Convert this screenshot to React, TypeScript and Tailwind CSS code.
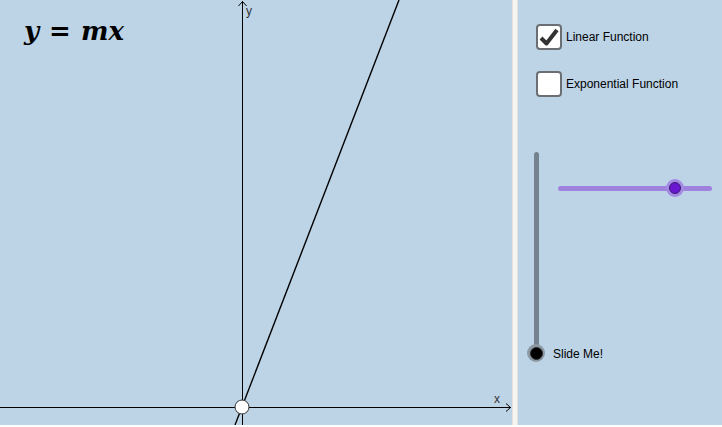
import React from 'react'

const BG = 'bg-[#bdd4e7]'

function Graph() {
  // origin of the coordinate system in canvas pixels
  const ox = 242.5
  const oy = 407.5
  return (
    <div className={`relative w-[512px] h-[425px] overflow-hidden ${BG}`}>
      <svg width="512" height="425" className="absolute inset-0">
        <line x1={ox} y1="425" x2={ox} y2="1" stroke="#000" strokeWidth="1" />
        <polyline points={`${ox - 4},6 ${ox},1.5 ${ox + 4},6`} fill="none" stroke="#000" strokeWidth="1" />
        <line x1="0" y1={oy} x2="511" y2={oy} stroke="#000" strokeWidth="1" />
        <polyline points={`506,${oy - 4} 510.5,${oy} 506,${oy + 4}`} fill="none" stroke="#000" strokeWidth="1" />
        <text x="246" y="15" fontFamily="Liberation Sans, Arial, sans-serif" fontSize="12" fill="#333">y</text>
        <text x="494" y="403" fontFamily="Liberation Sans, Arial, sans-serif" fontSize="12" fill="#333">x</text>
        <line x1="235" y1="425" x2="399" y2="0" stroke="#000" strokeWidth="1.4" />
        <circle cx={ox - 0.5} cy={oy - 0.5} r="7" fill="#fff" stroke="#333" strokeWidth="1" />
      </svg>
      <div className="absolute left-[24px] top-[12px] flex items-baseline text-[26px] font-bold text-black font-['DejaVu_Serif',serif]">
        <span className="italic">y</span>
        <span className="mx-[10px]">=</span>
        <span className="italic">mx</span>
      </div>
    </div>
  )
}

function Checkbox({ checked, label }: { checked: boolean; label: string }) {
  return (
    <div className="flex items-center gap-[4px] h-[26px]">
      <div className="w-[26px] h-[26px] rounded-[4px] border-2 border-[#6b6f73] bg-white flex items-center justify-center">
        {checked && (
          <svg width="20" height="18" viewBox="0 0 20 18">
            <path d="M2 10 L7.5 15.5 L18 2" fill="none" stroke="#333" strokeWidth="4" strokeLinejoin="round" />
          </svg>
        )}
      </div>
      <span className="text-[12px] text-black font-['Liberation_Sans',Arial,sans-serif]">{label}</span>
    </div>
  )
}

function Sliders() {
  return (
    <div className="relative mt-[55px] h-[220px]">
      {/* vertical slider */}
      <div className="absolute left-[-2px] top-0 w-[5px] h-[201px] rounded-full bg-[#74838f]" />
      <div className="absolute left-[-9px] top-[192px] w-[18px] h-[18px] rounded-full bg-[#8c99a3] flex items-center justify-center">
        <div className="w-[13px] h-[13px] rounded-full bg-black border border-[#2a2a2a]" />
      </div>
      <span className="absolute left-[17px] top-[193px] text-[12px] text-black font-['Liberation_Sans',Arial,sans-serif]">Slide Me!</span>

      {/* horizontal slider */}
      <div className="absolute left-[22px] top-[34px] w-[154px] h-[5px] rounded-full bg-[#9f82de]" />
      <div className="absolute left-[130px] top-[27px] w-[18px] h-[18px] rounded-full bg-[#a48ae4] flex items-center justify-center">
        <div className="w-[12px] h-[12px] rounded-full bg-[#6a18cf] border border-[#3a1a70]" />
      </div>
    </div>
  )
}

export default function App() {
  return (
    <div className="w-[722px] h-[427px] bg-white flex items-start">
      <Graph />
      <div className="w-[6px] h-[425px] bg-[#f6f4f1] border-x border-[#e4e2df]" />
      <div className={`flex-1 h-[425px] ${BG} flex flex-col pl-[18px] pt-[24px]`}>
        <Checkbox checked label="Linear Function" />
        <div className="h-[21px]" />
        <Checkbox checked={false} label="Exponential Function" />
        <Sliders />
      </div>
    </div>
  )
}
